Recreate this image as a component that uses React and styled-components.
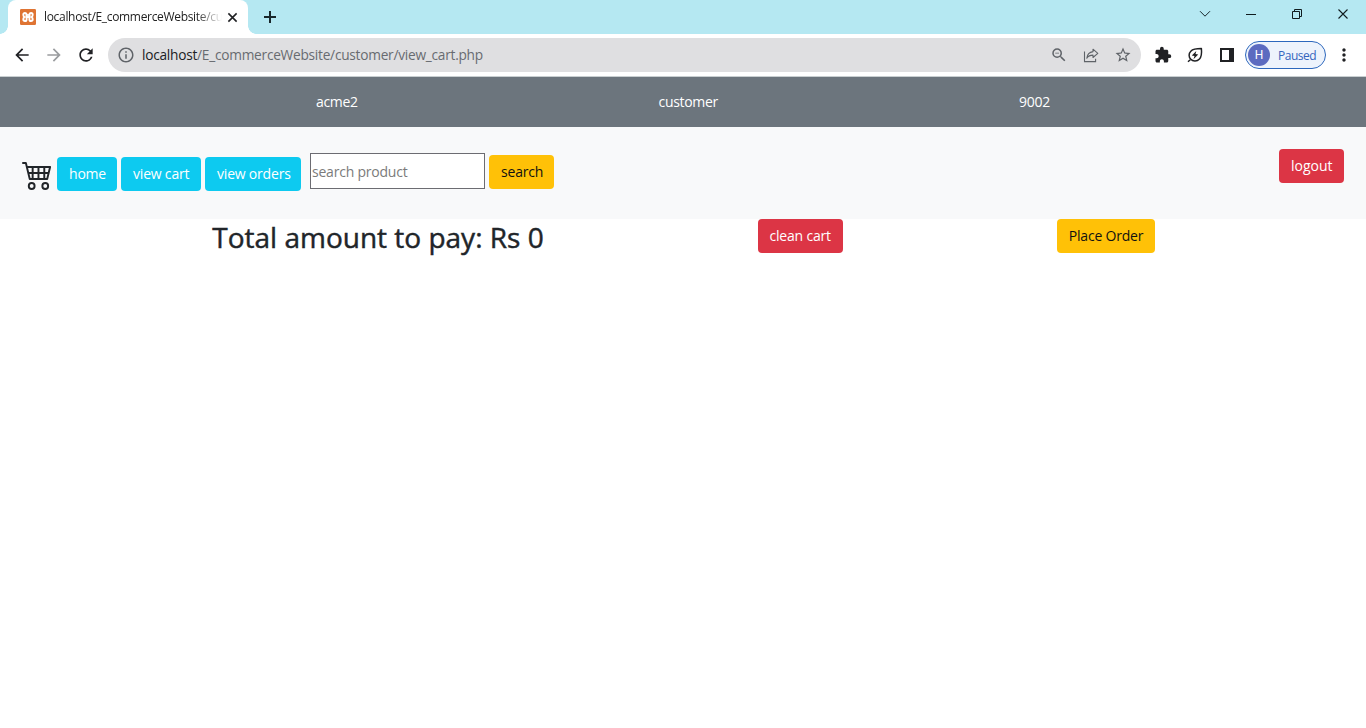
import React from 'react';
import styled, { createGlobalStyle, css } from 'styled-components';
import { MdArrowBack, MdArrowForward, MdRefresh, MdInfoOutline, MdZoomOut, MdStarBorder, MdExtension, MdMoreVert } from 'react-icons/md';
import { BsCart4 } from 'react-icons/bs';

const GlobalStyle = createGlobalStyle`
  * { box-sizing: border-box; }
  body {
    margin: 0;
    background: #fff;
    color: #212529;
    font-family: "Open Sans", "Noto Sans", sans-serif;
    overflow: hidden;
  }
  svg { display: block; flex: none; }
`;

const Window = styled.div`
  display: flex;
  flex-direction: column;
  width: 1366px;
  height: 728px;
  background: #fff;
`;

const TabStrip = styled.div`
  display: flex;
  height: 34px;
  padding-left: 8px;
  background: #b5e8f2;
`;

const Tab = styled.div`
  display: flex;
  align-items: center;
  width: 240px;
  padding: 0 9px 0 12px;
  background: #fff;
  border-radius: 8px 8px 0 0;
  position: relative;
  &::before, &::after {
    content: '';
    position: absolute;
    bottom: 0;
    width: 8px;
    height: 8px;
  }
  &::before {
    left: -8px;
    background: radial-gradient(circle at 0 0, transparent 7.5px, #fff 8px);
  }
  &::after {
    right: -8px;
    background: radial-gradient(circle at 100% 0, transparent 7.5px, #fff 8px);
  }
`;

const TabTitle = styled.div`
  width: 178px;
  margin-left: 8px;
  white-space: nowrap;
  font-size: 12px;
  line-height: 16px;
  letter-spacing: -0.32px;
  color: #222;
  mask-image: linear-gradient(to right, #000 152px, transparent 178px);
`;

const TabClose = styled.div`
  margin-left: 5px;
`;

const NewTab = styled.div`
  display: flex;
  align-items: center;
  margin-left: 15px;
`;

const WindowControls = styled.div`
  display: flex;
  margin-left: auto;
`;

const WindowControl = styled.div`
  display: flex;
  align-items: center;
  justify-content: center;
  width: 46px;
  height: 28px;
`;

const Toolbar = styled.div`
  display: flex;
  align-items: center;
  height: 43px;
  padding: 0 10px 0 12px;
  border-bottom: 1px solid #c9cfd1;
`;

const NavIcons = styled.div`
  display: flex;
  gap: 12px;
  width: 96px;
  color: #202124;
`;

const AddressBar = styled.div`
  display: flex;
  align-items: center;
  flex: none;
  width: 1033px;
  height: 34px;
  padding: 0 9px 0 9px;
  border-radius: 17px;
  background: #dfdfe1;
  color: #5f6368;
`;

const Url = styled.div`
  flex: 1;
  margin-left: 7px;
  font-size: 13.7px;
  line-height: 20px;
  letter-spacing: -0.25px;
  white-space: nowrap;
  color: #686b70;
  b { font-weight: 400; color: #202124; }
`;

const AddressActions = styled.div`
  display: flex;
  align-items: center;
  gap: 14px;
`;

const Extensions = styled.div`
  display: flex;
  align-items: center;
  gap: 14px;
  margin-left: 13px;
  color: #202124;
`;

const Profile = styled.div`
  display: flex;
  align-items: center;
  flex: none;
  width: 81px;
  height: 28px;
  margin-left: 9px;
  padding-left: 2px;
  border: 1px solid #2d68bd;
  border-radius: 14px;
  background: #edf3fc;
  color: #3565bd;
  font-size: 12px;
  letter-spacing: -0.5px;
`;

const Avatar = styled.div`
  display: flex;
  align-items: center;
  justify-content: center;
  width: 22px;
  height: 22px;
  margin-right: 8px;
  border-radius: 50%;
  background: #5c6bc0;
  color: #fff;
  font-family: Roboto, sans-serif;
  font-size: 12px;
  letter-spacing: 0;
`;

const Menu = styled.div`
  margin-left: 8px;
  color: #202124;
`;

const AccountBar = styled.div`
  display: flex;
  align-items: center;
  justify-content: space-evenly;
  height: 50px;
  padding: 0 14.4px;
  background: #6c757d;
  color: #fff;
`;

const AccountItem = styled.div`
  width: ${(p) => p.$width}px;
  font-size: 14px;
  line-height: 22px;
  letter-spacing: -0.3px;
  white-space: nowrap;
`;

const Navbar = styled.div`
  display: flex;
  align-items: flex-start;
  height: 92px;
  padding: 22px 22px 0;
  background: #f8f9fa;
`;

const CartIcon = styled(BsCart4)`
  width: 31px;
  height: 32px;
  margin: 9px 4px 0 0;
`;

const LinkGroup = styled.div`
  display: flex;
  gap: 4px;
  margin-top: 8px;
`;

const variants = {
  info: css`background: #0dcaf0; color: #fff;`,
  warning: css`background: #ffc107; color: #111;`,
  danger: css`background: #dc3545; color: #fff;`,
};

const Button = styled.button`
  display: flex;
  align-items: center;
  width: ${(p) => p.$width}px;
  height: 34px;
  padding: 0 0 0 12px;
  border: 0;
  border-radius: 4px;
  font-family: inherit;
  font-size: 14px;
  line-height: 22px;
  letter-spacing: ${(p) => p.$spacing ?? -0.2}px;
  white-space: nowrap;
  ${(p) => variants[p.$variant]}
`;

const SearchForm = styled.div`
  display: flex;
  align-items: center;
  gap: 4px;
  height: 38px;
  margin: 4px auto 0 9px;
`;

const SearchInput = styled.input`
  align-self: flex-start;
  width: 175px;
  height: 36px;
  padding: 1px;
  border: 1px solid #6c6c72;
  border-radius: 0;
  background: #fff;
  font-family: inherit;
  font-size: 14px;
  letter-spacing: -0.22px;
  &::placeholder { color: #7b7b7b; opacity: 1; }
`;

const Summary = styled.div`
  display: flex;
  justify-content: space-evenly;
  align-items: flex-start;
  gap: 3px;
`;

const Total = styled.h2`
  width: 332px;
  margin: 0;
  padding-left: 1px;
  font-size: 28px;
  font-weight: 400;
  -webkit-text-stroke: 0.45px currentColor;
  line-height: 36px;
  white-space: nowrap;
`;

const XamppIcon = () => (
  <svg width="16" height="16" viewBox="0 0 16 16">
    <rect width="16" height="16" rx="1.2" fill="#df7433" />
    <g fill="none" stroke="#fff" strokeWidth="1.9" strokeLinejoin="round" strokeLinecap="round">
      <path d="M6.4 6.6 V5.2 Q6.2 4 5 4 Q3.3 4 3.3 5.7 Q3.3 7.2 4.4 8 Q3.3 8.8 3.3 10.3 Q3.3 12 5 12 Q6.6 12 6.6 10.4 V9" />
      <path d="M9.6 6.6 V5.2 Q9.8 4 11 4 Q12.7 4 12.7 5.7 Q12.7 7.2 11.6 8 Q12.7 8.8 12.7 10.3 Q12.7 12 11 12 Q9.4 12 9.4 10.4 V9" />
      <path d="M6.4 7.9 H9.6" strokeWidth="2.4" />
      <path d="M6.4 4.8 L8 6.6 L9.6 4.8" strokeWidth="1.3" />
    </g>
  </svg>
);

const CloseIcon = ({ size, weight, color }) => (
  <svg width={size} height={size} viewBox="0 0 12 12" fill="none" stroke={color} strokeWidth={weight}>
    <path d="M1.5 1.5 L10.5 10.5 M10.5 1.5 L1.5 10.5" />
  </svg>
);

const PlusIcon = () => (
  <svg width="14" height="14" viewBox="0 0 14 14" stroke="#18272b" strokeWidth="2">
    <path d="M7 1 V13 M1 7 H13" />
  </svg>
);

const ChevronIcon = () => (
  <svg width="12" height="8" viewBox="0 0 12 8" fill="none" stroke="#16262a" strokeWidth="1">
    <path d="M1 1.2 L6 6.2 L11 1.2" />
  </svg>
);

const MinimizeIcon = () => (
  <svg width="10" height="1" viewBox="0 0 10 1">
    <rect width="10" height="1" fill="#101c1f" />
  </svg>
);

const RestoreIcon = () => (
  <svg width="10" height="10" viewBox="0 0 10 10" fill="none" stroke="#101c1f">
    <path d="M0.5 2.5 H7.5 V9.5 H0.5 Z M2.5 2.5 V0.5 H9.5 V7.5 H7.5" />
  </svg>
);

const ShareIcon = () => (
  <svg width="18" height="18" viewBox="0 0 18 18" fill="none" stroke="currentColor" strokeWidth="1.1">
    <path d="M2.5 5.6 V15.6 H13.6 V12.8" />
    <path d="M11 3.2 L15.8 7.4 L11 11.5 V9.1 C8 9.1 6 10.3 4.8 12.2 C5.2 8.8 7.2 6.1 11 5.6 Z" strokeLinejoin="round" />
  </svg>
);

const LeafIcon = () => (
  <svg width="18" height="18" viewBox="0 0 18 18" fill="none" stroke="currentColor" strokeWidth="1.5">
    <path d="M2 15.8 L4.3 13.7" />
    <path d="M15.4 2.6 C15.8 7 15.7 10.7 13.5 13 C11 15.6 7 15.7 4.8 13.3 C2.5 10.9 2.6 7.4 4.8 5.2 C7.1 2.9 10.8 2.6 15.4 2.6 Z" strokeLinejoin="round" />
    <path d="M10.3 4.9 L5.8 9.5 L8.5 10 L7.5 13.2 L12.2 8.5 L9.5 8 Z" fill="currentColor" stroke="none" />
  </svg>
);

const SidePanelIcon = () => (
  <svg width="18" height="14" viewBox="-2 0 18 14">
    <path d="M1 1 H13 V13 H1 Z" fill="none" stroke="currentColor" strokeWidth="2" />
    <path d="M9 1 H13 V13 H9 Z" fill="currentColor" />
  </svg>
);

export default function App() {
  return (
    <Window>
      <GlobalStyle />
      <TabStrip>
        <Tab>
          <XamppIcon />
          <TabTitle>localhost/E_commerceWebsite/cu</TabTitle>
          <TabClose><CloseIcon size={11} weight={1.7} color="#202124" /></TabClose>
        </Tab>
        <NewTab><PlusIcon /></NewTab>
        <WindowControls>
          <WindowControl><ChevronIcon /></WindowControl>
          <WindowControl><MinimizeIcon /></WindowControl>
          <WindowControl><RestoreIcon /></WindowControl>
          <WindowControl><CloseIcon size={12} weight={1.1} color="#101c1f" /></WindowControl>
        </WindowControls>
      </TabStrip>
      <Toolbar>
        <NavIcons>
          <MdArrowBack size={20} />
          <MdArrowForward size={20} color="#9a9c9f" />
          <MdRefresh size={20} />
        </NavIcons>
        <AddressBar>
          <MdInfoOutline size={18} />
          <Url><b>localhost</b>/E_commerceWebsite/customer/view_cart.php</Url>
          <AddressActions>
            <MdZoomOut size={18} />
            <ShareIcon />
            <MdStarBorder size={18} />
          </AddressActions>
        </AddressBar>
        <Extensions>
          <MdExtension size={18} />
          <LeafIcon />
          <SidePanelIcon />
        </Extensions>
        <Profile><Avatar>H</Avatar>Paused</Profile>
        <Menu><MdMoreVert size={20} /></Menu>
      </Toolbar>
      <AccountBar>
        <AccountItem $width={41}>acme2</AccountItem>
        <AccountItem $width={59}>customer</AccountItem>
        <AccountItem $width={31}>9002</AccountItem>
      </AccountBar>
      <Navbar>
        <CartIcon preserveAspectRatio="none" />
        <LinkGroup>
          <Button $variant="info" $width={60}>home</Button>
          <Button $variant="info" $width={80}>view cart</Button>
          <Button $variant="info" $width={96}>view orders</Button>
        </LinkGroup>
        <SearchForm>
          <SearchInput placeholder="search product" />
          <Button $variant="warning" $width={65}>search</Button>
        </SearchForm>
        <Button $variant="danger" $width={65} $spacing={0}>logout</Button>
      </Navbar>
      <Summary>
        <Total>Total amount to pay: Rs 0</Total>
        <Button $variant="danger" $width={85}>clean cart</Button>
        <Button $variant="warning" $width={98}>Place Order</Button>
      </Summary>
    </Window>
  );
}
